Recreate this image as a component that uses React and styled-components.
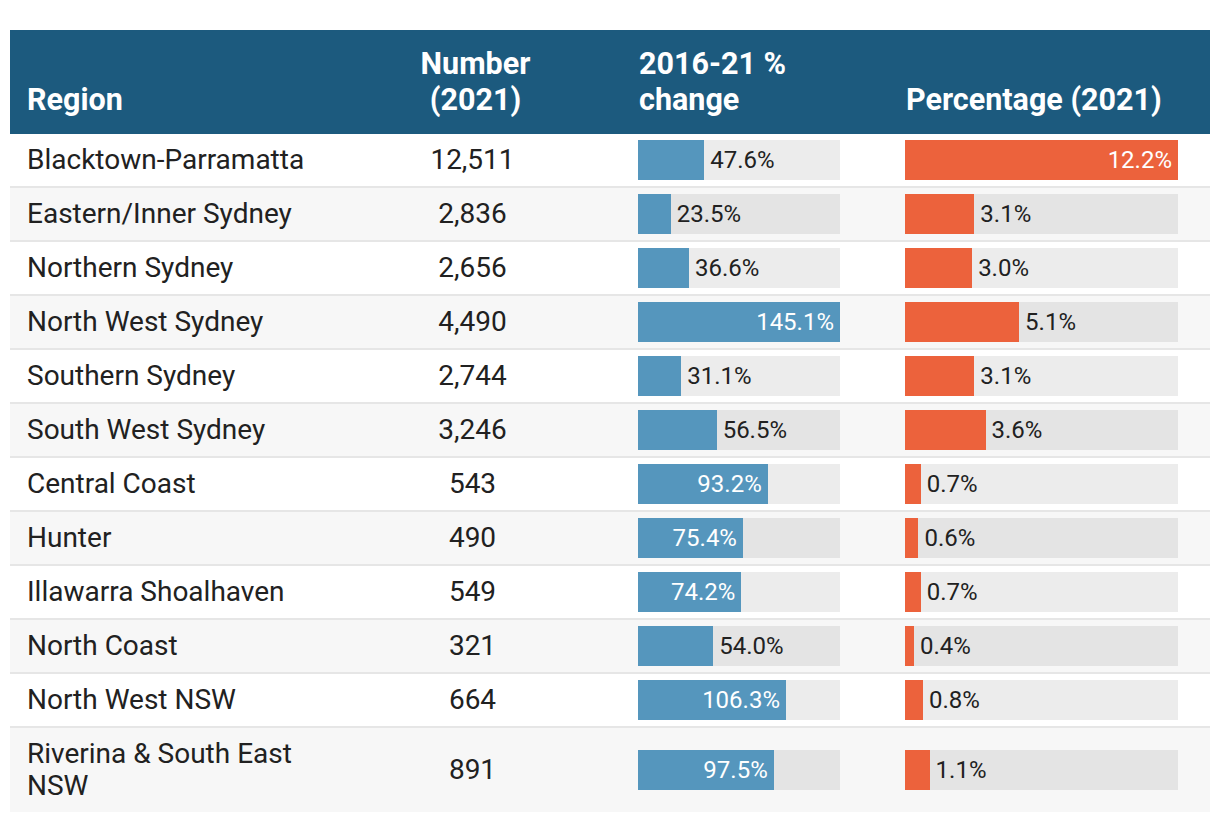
import React from 'react';
import styled, { createGlobalStyle } from 'styled-components';

const GlobalStyle = createGlobalStyle`
  body {
    margin: 0;
    background: #ffffff;
    font-family: Roboto, "Liberation Sans", sans-serif;
    color: #212121;
  }
`;

const rows = [
  { region: 'Blacktown-Parramatta', number: '12,511', change: 47.6, pct: 12.2 },
  { region: 'Eastern/Inner Sydney', number: '2,836', change: 23.5, pct: 3.1 },
  { region: 'Northern Sydney', number: '2,656', change: 36.6, pct: 3.0 },
  { region: 'North West Sydney', number: '4,490', change: 145.1, pct: 5.1 },
  { region: 'Southern Sydney', number: '2,744', change: 31.1, pct: 3.1 },
  { region: 'South West Sydney', number: '3,246', change: 56.5, pct: 3.6 },
  { region: 'Central Coast', number: '543', change: 93.2, pct: 0.7 },
  { region: 'Hunter', number: '490', change: 75.4, pct: 0.6 },
  { region: 'Illawarra Shoalhaven', number: '549', change: 74.2, pct: 0.7 },
  { region: 'North Coast', number: '321', change: 54.0, pct: 0.4 },
  { region: 'North West NSW', number: '664', change: 106.3, pct: 0.8 },
  { region: 'Riverina & South East NSW', number: '891', change: 97.5, pct: 1.1 },
];

const MAX_CHANGE = 145.1;
const MAX_PCT = 12.2;

const Page = styled.div`
  padding: 30px 10px 10px;
`;

const Table = styled.div`
  width: 1200px;
`;

const Row = styled.div`
  display: grid;
  grid-template-columns: 312px 300px 267px 321px;
  align-items: center;
  background: ${p => (p.$alt ? '#f7f7f7' : '#ffffff')};
  border-bottom: ${p => (p.$last ? 'none' : '2px solid #e6e6e6')};
`;

const HeaderRow = styled.div`
  display: grid;
  grid-template-columns: 312px 300px 267px 321px;
  align-items: end;
  background: #1c5a7e;
  color: #ffffff;
`;

const HeadCell = styled.div`
  padding: 16px 10px 16px 17px;
  font-size: 30.5px;
  line-height: 36px;
  font-weight: 700;
  white-space: nowrap;
  text-align: ${p => p.$align || 'left'};
`;

const Cell = styled.div`
  padding: 10px 16px 10px 17px;
  font-size: 28px;
  line-height: 32px;
  text-align: ${p => p.$align || 'left'};
`;

const BarCell = styled.div`
  padding: 6px 16px;
`;

const Track = styled.div`
  width: ${p => p.$width}px;
  height: 40px;
  background: rgba(0, 0, 0, 0.075);
  display: flex;
  align-items: center;
`;

const Fill = styled.div`
  height: 100%;
  background: ${p => p.$color};
  display: flex;
  align-items: center;
  justify-content: flex-end;
  flex-shrink: 0;
`;

const Label = styled.span`
  font-size: 24px;
  line-height: 40px;
  white-space: nowrap;
  color: ${p => (p.$inside ? '#ffffff' : '#212121')};
  padding: ${p => (p.$inside ? '0 6px 0 0' : '0 0 0 6px')};
`;

const Bar = ({ value, max, width, color }) => {
  const fillWidth = (value / max) * width;
  const inside = value / max > 0.5;
  const text = `${value.toFixed(1)}%`;
  return (
    <Track $width={width}>
      <Fill $color={color} style={{ width: fillWidth }}>
        {inside && <Label $inside>{text}</Label>}
      </Fill>
      {!inside && <Label>{text}</Label>}
    </Track>
  );
};

const App = () => (
  <Page>
    <GlobalStyle />
    <Table>
      <HeaderRow>
        <HeadCell>Region</HeadCell>
        <HeadCell $align="center">Number<br />(2021)</HeadCell>
        <HeadCell>2016-21 %<br />change</HeadCell>
        <HeadCell>Percentage (2021)</HeadCell>
      </HeaderRow>
      {rows.map((r, i) => (
        <Row key={r.region} $alt={i % 2 === 1} $last={i === rows.length - 1}>
          <Cell>{r.region}</Cell>
          <Cell $align="center">{r.number}</Cell>
          <BarCell>
            <Bar value={r.change} max={MAX_CHANGE} width={202} color="#5596bd" />
          </BarCell>
          <BarCell>
            <Bar value={r.pct} max={MAX_PCT} width={273} color="#ec623c" />
          </BarCell>
        </Row>
      ))}
    </Table>
  </Page>
);

export default App;
